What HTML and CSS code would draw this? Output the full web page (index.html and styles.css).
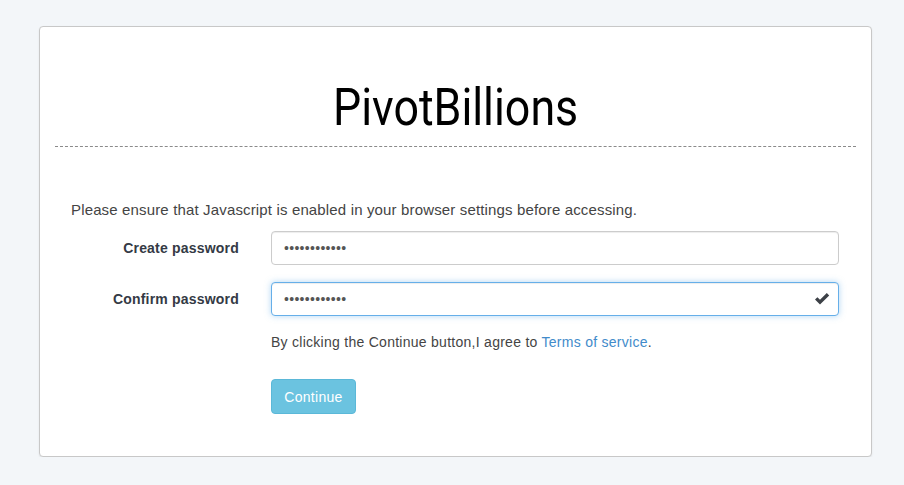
FILE: index.html
```html
<!DOCTYPE html>
<html>
<head>
<meta charset="utf-8">
<link rel="stylesheet" href="styles.css">
</head>
<body>
<div class="card">
  <div class="header">
    <h1 class="title">PivotBillions</h1>
  </div>
  <div class="body">
    <p class="notice">Please ensure that Javascript is enabled in your browser settings before accessing.</p>
    <div class="row">
      <label class="label">Create password</label>
      <div class="field">
        <input class="input" type="password" value="123456789012">
      </div>
    </div>
    <div class="row">
      <label class="label">Confirm password</label>
      <div class="field">
        <input class="input focus" type="password" value="123456789012">
        <svg class="check" width="16" height="14" viewBox="0 0 16 14"><path d="M1 7.5 L3.4 5.2 L6 7.8 L12.8 1 L15.2 3.4 L6 12.6 Z" fill="#3d4147"/></svg>
      </div>
    </div>
    <div class="row">
      <div class="label"></div>
      <div class="field">
        <p class="terms">By clicking the Continue button,I agree to <a class="link" href="#">Terms of service</a>.</p>
        <button class="btn">Continue</button>
      </div>
    </div>
  </div>
</div>
</body>
</html>
```
FILE: styles.css
```css
html, body {
  margin: 0;
  padding: 0;
  background: #f3f6f9;
}
body {
  padding: 26px 32px 0 39px;
  font-family: "Liberation Sans", Arial, sans-serif;
  font-size: 14px;
  color: #333;
}
.card {
  width: 831px;
  height: 429px;
  background: #fff;
  border: 1px solid #c8c8c8;
  border-radius: 4px;
  box-shadow: 0 1px 2px rgba(0,0,0,0.08);
}
.header {
  margin: 0 15px;
  height: 119px;
  border-bottom: 1px dashed #8a8a8a;
  display: flex;
  justify-content: center;
}
.title {
  margin: 55px 0 0 0;
  font-family: Roboto, sans-serif;
  font-weight: 400;
  font-size: 52px;
  line-height: 52px;
  color: #000;
  transform: scaleX(0.86);
  height: 52px;
}
.body {
  padding: 53px 0 0 31px;
}
.notice {
  margin: 0 0 11px 0;
  line-height: 20px;
  font-size: 15px;
  letter-spacing: 0.15px;
  color: #444;
}
.row {
  display: flex;
  align-items: center;
  margin-bottom: 17px;
}
.label {
  width: 168px;
  text-align: right;
  font-weight: bold;
  letter-spacing: 0.2px;
  color: #343a45;
  padding-right: 32px;
  flex: none;
}
.field {
  position: relative;
  width: 568px;
}
.input {
  box-sizing: border-box;
  width: 568px;
  height: 34px;
  padding: 6px 12px;
  border: 1px solid #ccc;
  border-radius: 4px;
  font-family: "Liberation Sans", Arial, sans-serif;
  font-size: 14px;
  letter-spacing: 0.3px;
  color: #555;
  box-shadow: inset 0 1px 1px rgba(0,0,0,0.075);
  outline: none;
  display: block;
}
.input.focus {
  border-color: #66afe9;
  box-shadow: inset 0 1px 1px rgba(0,0,0,0.075), 0 0 6px rgba(102,175,233,0.5);
}
.check {
  position: absolute;
  right: 9px;
  top: 10px;
}
.terms {
  margin: -1px 0 27px 0;
  line-height: 20px;
  letter-spacing: 0.27px;
  color: #444;
}
.link {
  color: #428bca;
  text-decoration: none;
}
.btn {
  width: 85px;
  height: 35px;
  background: #6bc3e0;
  border: 1px solid #5bb8d8;
  border-radius: 4px;
  color: #fff;
  font-family: "Liberation Sans", Arial, sans-serif;
  font-size: 14px;
  letter-spacing: 0.3px;
  padding: 0;
}
```
